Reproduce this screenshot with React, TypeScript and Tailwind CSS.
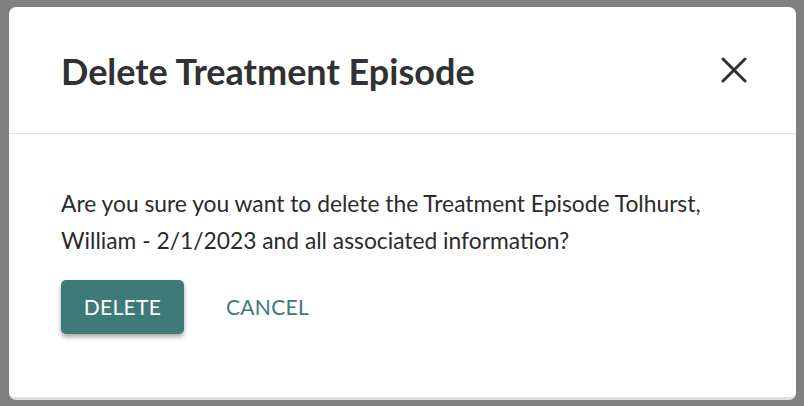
import React from 'react';

function CloseIcon() {
  return (
    <svg width="26" height="26" viewBox="0 0 26 26" fill="none" stroke="#2f3133" strokeWidth="3" strokeLinecap="round">
      <path d="M2 2L24 24M24 2L2 24" />
    </svg>
  );
}

export default function App() {
  return (
    <div className="w-[804px] h-[406px] bg-[#808080] p-[7px_8px_6px_9px]" style={{ fontFamily: 'Lato, "Open Sans", sans-serif' }}>
      <div className="h-full bg-white rounded-[7px] border-b-[3px] border-[#dedede] flex flex-col">
        <div className="h-[127px] flex items-center justify-between pl-[52px] pr-[49px] border-b border-[#e2e2e2]">
          <h2 className="text-[36px] font-bold text-[#2f3133] pt-[2px]">Delete Treatment Episode</h2>
          <button className="flex items-center justify-center">
            <CloseIcon />
          </button>
        </div>
        <div className="px-[52px] pt-[51px]">
          <p className="text-[22.8px] leading-[37px] text-[#2b2b2b]">
            Are you sure you want to delete the Treatment Episode Tolhurst, William - 2/1/2023 and all associated information?
          </p>
          <div className="flex items-center gap-[42px] mt-[21px]">
            <button className="w-[123px] h-[54px] rounded-[5px] bg-[#3d7a78] text-white text-[21px] tracking-[0.3px] shadow-[0_3px_5px_rgba(0,0,0,0.35)]">
              DELETE
            </button>
            <button className="text-[21px] tracking-[0.3px] text-[#3d7a78]">CANCEL</button>
          </div>
        </div>
      </div>
    </div>
  );
}
